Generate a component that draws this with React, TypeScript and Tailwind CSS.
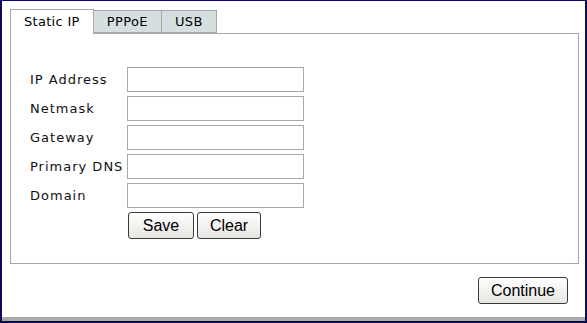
import React, { useState } from 'react'

const fields = ['IP Address', 'Netmask', 'Gateway', 'Primary DNS', 'Domain']
const tabs = ['Static IP', 'PPPoE', 'USB']

export default function App() {
  const [activeTab, setActiveTab] = useState('Static IP')

  return (
    <div className="w-[587px] h-[323px] flex flex-col bg-white border-t border-l-2 border-r-2 border-[#0b0b52] font-['DejaVu_Sans',sans-serif]">
      <div className="flex-1 flex flex-col pl-[8px] pr-[6px] pt-[8px]">
        {/* tabs */}
        <div className="flex items-end h-[24px]">
          {tabs.map((tab) => (
            <button
              key={tab}
              onClick={() => setActiveTab(tab)}
              className={
                activeTab === tab
                  ? 'h-[25px] -mb-px relative z-10 px-[13px] bg-white border border-b-0 border-[#a8a8a8] text-[13px] tracking-[0.3px] text-black'
                  : 'h-[23px] px-[13px] bg-[#d5dfe0] border border-l-0 border-[#a8a8a8] text-[13px] tracking-[0.4px] text-black'
              }
            >
              {tab}
            </button>
          ))}
        </div>

        {/* panel */}
        <div className="h-[231px] border border-[#a8a8a8] pl-[19px] pt-[33px]">
          <div className="flex flex-col gap-[4px]">
            {fields.map((f) => (
              <div key={f} className="flex items-center h-[25px]">
                <span className="w-[97px] whitespace-nowrap text-[13px] tracking-[1px] text-[#111]">{f}</span>
                <input className="w-[177px] h-[25px] border border-[#a8a8a8] bg-white outline-none" />
              </div>
            ))}
          </div>
          <div className="flex gap-[3px] ml-[98px] mt-[4px] font-['Liberation_Sans',sans-serif]">
            <button className="w-[66px] h-[27px] rounded-[3px] border border-[#3a3a3a] bg-gradient-to-b from-white to-[#e6e6e2] text-[16px] text-black">
              Save
            </button>
            <button className="w-[64px] h-[27px] rounded-[3px] border border-[#3a3a3a] bg-gradient-to-b from-white to-[#e6e6e2] text-[16px] text-black">
              Clear
            </button>
          </div>
        </div>

        <div className="flex justify-end mt-[13px] pr-[11px] font-['Liberation_Sans',sans-serif]">
          <button className="w-[90px] h-[27px] rounded-[3px] border border-[#3a3a3a] bg-gradient-to-b from-white to-[#e6e6e2] text-[16px] text-black">
            Continue
          </button>
        </div>
      </div>
      <div className="h-[4px] bg-[#a9a9a9]" />
      <div className="h-[2px] bg-[#0b0b52]" />
    </div>
  )
}
